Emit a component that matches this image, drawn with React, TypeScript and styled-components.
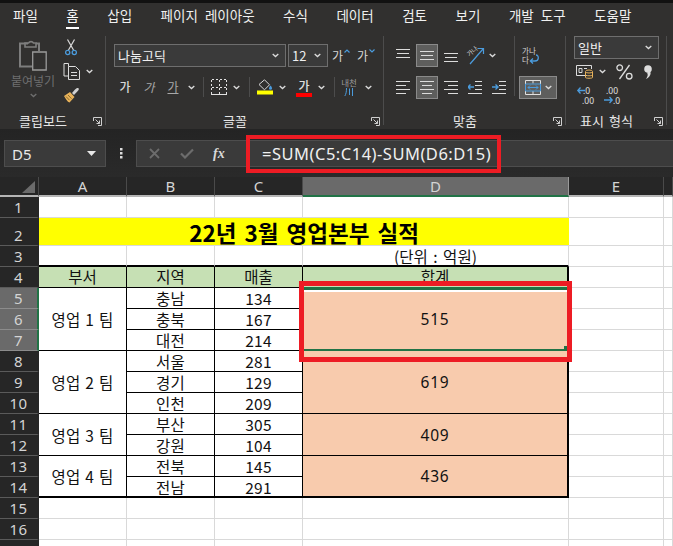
import React from 'react'
import styled, { createGlobalStyle } from 'styled-components'

const FONT = '"Noto Sans CJK KR", "Noto Sans", sans-serif'
const LATIN = '"Noto Sans", "Noto Sans CJK KR", sans-serif'
const BLUE = '#4b9bdc'
const LINE = '#d9d9d9'

const GlobalStyle = createGlobalStyle`
  html, body { margin: 0; padding: 0; height: 100%; overflow: hidden; background: #242424; }
  #root { height: 100%; }
  * { box-sizing: border-box; }
`

const Page = styled.div`
  width: 673px;
  height: 546px;
  display: flex;
  flex-direction: column;
  font-family: ${FONT};
  overflow: hidden;
  position: relative;
  background: #242424;
  border-top: 3px solid #111;
`
const TabBar = styled.div`
  height: 30px;
  flex: none;
  display: flex;
  align-items: flex-start;
  gap: 28.5px;
  padding: 2px 0 0 13px;
  background: #31302f;
`
const Tab = styled.div<{ $active?: boolean }>`
  color: ${p => (p.$active ? '#fff' : '#f0f0f0')};
  font-size: 13.5px;
  word-spacing: 4px;
  line-height: 20px;
  height: 24px;
  white-space: nowrap;
  border-bottom: ${p => (p.$active ? '2px solid #fff' : '2px solid transparent')};
`
const Ribbon = styled.div`
  height: 96px;
  flex: none;
  display: flex;
  background: #31302f;
  padding-bottom: 4px;
`
const Group = styled.div<{ $w: number }>`
  width: ${p => p.$w}px;
  flex: none;
  display: flex;
  flex-direction: column;
  border-right: 1px solid #4c4c4c;
  margin-top: 3px;
`
const GroupBody = styled.div`
  flex: 1;
  min-height: 0;
  display: flex;
`
const GroupFoot = styled.div`
  height: 20px;
  display: grid;
  grid-template-columns: 1fr auto 1fr;
  align-items: end;
  color: #e6e6e6;
  font-size: 13px;
  line-height: 16px;
  padding-right: 3px;
  & > svg { justify-self: end; margin-bottom: -1px; }
  & > span { white-space: nowrap; margin: 0 16px -4px 0; word-spacing: 2px; }
`
const PasteButton = styled.div`
  width: 58px;
  margin-left: 4px;
  display: flex;
  flex-direction: column;
  align-items: center;
  padding-top: 4px;
  color: #6f6f6f;
  font-size: 12px;
  line-height: 15px;
  & > span { margin: 2px 0 5px; white-space: nowrap; }
`
const ClipColumn = styled.div`
  display: flex;
  flex-direction: column;
  gap: 7px;
  padding-top: 3px;
`
const Column = styled.div<{ $pl?: number }>`
  display: flex;
  flex-direction: column;
  padding-left: ${p => p.$pl ?? 0}px;
`
const Row = styled.div<{ $h: number; $mt?: number; $ml?: number }>`
  display: flex;
  align-items: center;
  height: ${p => p.$h}px;
  margin-top: ${p => p.$mt ?? 0}px;
  margin-left: ${p => p.$ml ?? 0}px;
`
const Slot = styled.div<{ $w: number; $ml?: number }>`
  width: ${p => p.$w}px;
  margin-left: ${p => p.$ml ?? 0}px;
  flex: none;
  display: flex;
  align-items: center;
  justify-content: center;
  color: #d8d8d8;
  font-size: 12px;
  line-height: 14px;
`
const Select = styled.div<{ $w: number; $ml?: number }>`
  width: ${p => p.$w}px;
  height: 23px;
  margin-left: ${p => p.$ml ?? 0}px;
  flex: none;
  display: flex;
  align-items: center;
  justify-content: space-between;
  padding: 0 6px 0 3px;
  background: #3a3a3a;
  border: 1px solid #6e6e6e;
  color: #f0f0f0;
  font-size: 13px;
`
const ToggleButton = styled.div<{ $on?: boolean; $w?: number }>`
  width: ${p => p.$w ?? 22}px;
  height: 23px;
  flex: none;
  display: flex;
  align-items: center;
  justify-content: center;
  gap: 4px;
  background: ${p => (p.$on ? '#5e5e5d' : 'transparent')};
  border: 1px solid ${p => (p.$on ? '#8a8a8a' : 'transparent')};
`
const RibbonDivider = styled.div<{ $ml?: number; $h?: number }>`
  width: 1px;
  height: ${p => p.$h ?? 20}px;
  margin-left: ${p => p.$ml ?? 0}px;
  flex: none;
  background: #4c4c4c;
`
const StrongGa = styled.span`
  font-weight: 500;
  color: #d8d8d8;
`
const ItalicGa = styled.span`
  font-style: italic;
  color: #a8a8a8;
`
const UnderGa = styled.span`
  text-decoration: underline;
  color: #a8a8a8;
`
const ColorGa = styled.span`
  width: 16px;
  height: 19px;
  display: block;
  text-align: center;
  color: #e0e0e0;
  font-size: 12px;
  line-height: 15px;
  font-weight: 500;
  border-bottom: 4px solid #f00;
`
const ResizeGa = styled.span`
  display: flex;
  align-items: flex-start;
  gap: 1px;
  color: #d8d8d8;
  font-size: 12px;
  line-height: 14px;
`
const PhoneticStack = styled.span`
  display: flex;
  flex-direction: column;
  align-items: center;
  gap: 1px;
  color: #9a9a9a;
  font-size: 8.5px;
  line-height: 9px;
`

const FormulaBar = styled.div`
  height: 48px;
  flex: none;
  display: flex;
  align-items: flex-start;
  padding-top: 11px;
  background: linear-gradient(#242424, #2a2a2a);
`
const NameBox = styled.div`
  width: 102px;
  height: 27px;
  margin-left: 4px;
  display: flex;
  align-items: center;
  justify-content: space-between;
  padding: 0 9px 0 7px;
  background: #3a3a3a;
  border: 1px solid #4d4d4d;
  color: #e8e8e8;
  font-family: ${LATIN};
  font-size: 15px;
`
const Dots = styled.div`
  width: 30px;
  height: 27px;
  display: flex;
  align-items: center;
  justify-content: center;
`
const FormulaButtons = styled.div`
  width: 111px;
  height: 27px;
  display: flex;
  align-items: center;
  background: #3a3a3a;
  border: 1px solid #4d4d4d;
  border-right: none;
  padding-left: 12px;
  gap: 20px;
`
const FxLabel = styled.span`
  font-family: "Liberation Serif", serif;
  font-style: italic;
  font-weight: 700;
  font-size: 14px;
  color: #d8d8d8;
  margin-left: -1px;
`
const FormulaInput = styled.div`
  flex: 1;
  height: 27px;
  display: flex;
  align-items: center;
  padding-left: 14px;
  background: #3a3a3a;
  border: 1px solid #4d4d4d;
  border-right: none;
  color: #f0f0f0;
  font-family: ${LATIN};
  font-size: 16.5px;
  letter-spacing: 0.5px;
  white-space: nowrap;
`
const Sheet = styled.div`
  flex: 1;
  display: grid;
  grid-template-columns: 39px 88px 88px 88px 266px 95px 1fr;
  grid-template-rows: 20px 21px 28px 21px repeat(14, 21px);
  background: #fff;
  overflow: hidden;
`
const CornerCell = styled.div`
  background: #262626;
  border-right: 1px solid #4a4a4a;
  border-bottom: 2px solid #b5b5b5;
  display: flex;
  justify-content: flex-end;
  align-items: flex-end;
  padding: 0 3px 2px 0;
`
const ColHead = styled.div<{ $on?: boolean }>`
  background: ${p => (p.$on ? '#6a6a6a' : '#262626')};
  border-right: 1px solid ${p => (p.$on ? '#9a9a9a' : '#4a4a4a')};
  border-bottom: 2px solid ${p => (p.$on ? '#217346' : '#b5b5b5')};
  color: #d4d4d4;
  font-family: ${LATIN};
  font-size: 15px;
  line-height: 18px;
  text-align: center;
`
const RowHead = styled.div<{ $on?: boolean }>`
  background: ${p => (p.$on ? '#6a6a6a' : '#262626')};
  border-right: 2px solid ${p => (p.$on ? '#217346' : '#262626')};
  border-bottom: 1px solid ${p => (p.$on ? '#8c8c8c' : '#5a5a5a')};
  color: #d4d4d4;
  font-family: ${LATIN};
  font-size: 15px;
  letter-spacing: 0.5px;
  display: flex;
  align-items: flex-end;
  justify-content: center;
  line-height: 20px;
`
const Blank = styled.div`
  border-right: 1px solid ${LINE};
  border-bottom: 1px solid ${LINE};
`
const TitleCell = styled.div`
  grid-column: span 4;
  background: #ff0;
  color: #000;
  font-size: 22.5px;
  font-weight: 700;
  word-spacing: 3px;
  line-height: 28px;
  text-align: center;
  border-bottom: 1px solid ${LINE};
  white-space: nowrap;
`
const UnitCell = styled.div`
  border-right: 1px solid ${LINE};
  border-bottom: 2px solid #000;
  color: #111;
  font-size: 15.5px;
  word-spacing: 2px;
  line-height: 20px;
  text-align: center;
`
const RuledBlank = styled(Blank)`
  border-bottom: 2px solid #000;
`
const HeadCell = styled.div<{ $last?: boolean }>`
  background: #c6e0b4;
  color: #111;
  font-size: 15.5px;
  line-height: 19px;
  text-align: center;
  border-right: ${p => (p.$last ? 2 : 1)}px solid #000;
  border-bottom: 1px solid #000;
`
const DataCell = styled.div<{ $rows?: number; $thick?: boolean }>`
  grid-row: span ${p => p.$rows ?? 1};
  display: flex;
  align-items: center;
  justify-content: center;
  color: #111;
  font-size: 15.5px;
  word-spacing: 1px;
  letter-spacing: 0.3px;
  border-right: 1px solid #000;
  border-bottom: ${p => (p.$thick ? 2 : 1)}px solid #000;
  white-space: nowrap;
`
const TotalCell = styled(DataCell)`
  background: #f8cbad;
  border-right: 2px solid #000;
  font-family: ${LATIN};
  letter-spacing: 0.8px;
  position: relative;
`
const SelectionFrame = styled.div`
  position: absolute;
  left: 0;
  right: 0;
  top: -1px;
  bottom: -1px;
  border-top: 3px solid #217346;
  border-bottom: 2px solid #217346;
  box-shadow: inset 0 2px 0 #fff;
`
const FillHandle = styled.div`
  position: absolute;
  right: 0;
  bottom: -2px;
  width: 3px;
  height: 5px;
  background: #217346;
`
const RedBox = styled.div<{ $b: number; $x: number; $y: number; $w: number; $h: number }>`
  position: absolute;
  left: ${p => p.$x}px;
  top: ${p => p.$y}px;
  width: ${p => p.$w}px;
  height: ${p => p.$h}px;
  border: ${p => p.$b}px solid #ed1c24;
  pointer-events: none;
`

const Chevron = ({ c = '#dcdcdc' }: { c?: string }) => (
  <svg width="7" height="5" viewBox="0 0 7 5"><path d="M.7 1l2.800 2.600L6.300 1" fill="none" stroke={c} strokeWidth="1.3" /></svg>
)
const Caret = ({ down }: { down?: boolean }) => (
  <svg width="6" height="4" viewBox="0 0 6 4"><path d={down ? 'M.5 .5L3 3l2.500-2.500' : 'M.5 3.500L3 1l2.500 2.500'} fill="none" stroke={BLUE} strokeWidth="1.2" /></svg>
)
const Launcher = () => (
  <svg width="9" height="9" viewBox="0 0 9 9" fill="none" stroke="#cfcfcf">
    <path d="M.5 4V.5h8v8H5" />
    <path d="M2.500 2.500L6.500 6.500M6.500 3.500v3h-3" stroke="#cfcfcf" />
  </svg>
)
const PasteIcon = () => (
  <svg width="28" height="31" viewBox="0 0 28 31" fill="none" stroke="#7d7d7d" strokeWidth="1.6">
    <path d="M9 3.500H1v23h12" strokeWidth="2" />
    <path d="M17 3.500h3V11" strokeWidth="2" />
    <path d="M6 6V3h3.500a3 3 0 0 1 5 0H17v4H6z" />
    <path d="M13.700 12h13.500v18H13.700z" stroke="#9a9a9a" strokeWidth="1.3" />
  </svg>
)
const ScissorsIcon = () => (
  <svg width="12" height="17" viewBox="0 0 12 17" fill="none">
    <path d="M2.500 .5L8.500 11M9.500 .5L3.500 11" stroke="#d8d8d8" strokeWidth="1.2" />
    <circle cx="2.700" cy="13.500" r="2.100" stroke={BLUE} strokeWidth="1.3" />
    <circle cx="9.300" cy="13.500" r="2.100" stroke={BLUE} strokeWidth="1.3" />
  </svg>
)
const CopyIcon = () => (
  <svg width="17" height="17" viewBox="0 0 17 17" fill="none" stroke="#dcdcdc">
    <path d="M5.500 3.500V.5H1v12.500h4" />
    <path d="M5.500 3.500h7l4 4v9h-11z" />
    <path d="M8 9.500h6M8 12.500h6" />
  </svg>
)
const PainterIcon = () => (
  <svg width="17" height="16" viewBox="0 0 17 16">
    <path d="M9 6l3-3.500c1.200-1.200 2.500-2 3.500-1.200 1 1-.2 2.200-1.400 3.400L11 8z" fill="#d0d0d0" />
    <path d="M1 9l6-4 4.500 5-5 5.500C4.500 15 2.500 11.500 1 9z" fill="#e8b25a" />
    <path d="M3 9.500l3.500 3.700M5 8l3.500 3.700" stroke="#8a6a2a" />
  </svg>
)
const BorderIcon = () => (
  <svg width="16" height="16" viewBox="0 0 16 16" fill="none" stroke="#e2e2e2" shapeRendering="crispEdges">
    <path d="M.5 .5h15M.5 .5v15M15.500 .5v15M8.500 .5v15M.5 8.500h15" strokeDasharray="2 2" />
    <path d="M0 15.500h16" />
  </svg>
)
const FillIcon = () => (
  <svg width="17" height="16" viewBox="0 0 17 16">
    <path d="M2 5.500L7.500 .8l5 5-5 5z" fill="none" stroke="#d8d8d8" />
    <path d="M13.500 6.500c1 1.300 1.500 2 1.500 2.800a1.500 1.500 0 0 1-3 0c0-.8.5-1.500 1.500-2.800z" fill={BLUE} />
    <rect y="11.500" width="16" height="4" fill="#ff0" />
  </svg>
)
const PhoneticMark = () => (
  <svg width="10" height="8" viewBox="0 0 10 8" fill="none" stroke={BLUE}>
    <path d="M2.500 0C2.500 4 2 6 .8 8M5.500 .5V7M8.500 0v8" />
  </svg>
)
const VerticalLines = ({ y }: { y: number[] }) => (
  <svg width="14" height="13" viewBox="0 0 14 13" stroke="#dcdcdc">
    <path d={`M0 ${y[0] + 0.5}H14`} />
    <path d={`M1 ${y[1] + 0.5}H13`} />
    <path d={`M0 ${y[2] + 0.5}H14`} />
  </svg>
)
const FourLines = ({ a }: { a: 'l' | 'c' | 'r' }) => {
  const seg = a === 'l' ? [[0, 14], [0, 10], [0, 14], [0, 10]] : a === 'c' ? [[0, 14], [2, 12], [0, 14], [2, 12]] : [[0, 14], [4, 14], [0, 14], [4, 14]]
  return (
    <svg width="14" height="13" viewBox="0 0 14 13" stroke="#dcdcdc">
      {seg.map((s, i) => <path key={i} d={`M${s[0]} ${i * 4 + 0.5}H${s[1]}`} />)}
    </svg>
  )
}
const OrientIcon = () => (
  <svg width="19" height="19" viewBox="0 0 19 19" fill="none" overflow="visible">
    <text x="1" y="9" fontSize="6.500" fill="#cfcfcf" fontFamily={FONT} transform="rotate(-40 5 7)">가나</text>
    <path d="M4 18L17 3M11.500 2.500H17.500V8" stroke={BLUE} strokeWidth="1.2" />
  </svg>
)
const IndentIcon = ({ inc }: { inc?: boolean }) => (
  <svg width="14" height="13" viewBox="0 0 14 13" fill="none">
    <path d="M7 .5h7M7 4.500h7M7 8.500h7M0 12.500h14" stroke="#dcdcdc" />
    <path d={inc ? 'M0 6h6M3.500 3.500L6 6 3.500 8.500' : 'M6 6H0M2.500 3.500L0 6l2.500 2.500'} stroke={BLUE} strokeWidth="1.4" />
  </svg>
)
const WrapIcon = () => (
  <svg width="18" height="19" viewBox="0 0 18 19" fill="none" overflow="visible">
    <text x="0" y="7.500" fontSize="7.500" fill="#d8d8d8" fontFamily={FONT}>가나</text>
    <text x="0" y="17" fontSize="7.500" fill="#d8d8d8" fontFamily={FONT}>다</text>
    <path d="M14 9c3 0 3.500 6-1 6H8.500M11 12.500L8.300 15l2.700 2.500" stroke={BLUE} strokeWidth="1.3" />
  </svg>
)
const MergeIcon = () => (
  <svg width="16" height="15" viewBox="0 0 16 15" fill="none">
    <path d="M.5 .5h15v14H.5zM8 .5v3M8 11v3" stroke="#e0e0e0" />
    <path d="M.5 4h15v7H.5z" stroke={BLUE} />
    <path d="M3 7.500h10M5 5.500l-2 2 2 2M11 5.500l2 2-2 2" stroke={BLUE} />
  </svg>
)
const CurrencyIcon = () => (
  <svg width="18" height="16" viewBox="0 0 18 16" fill="none">
    <path d="M11 11.500H.5v-10h15V5" stroke="#dcdcdc" />
    <path d="M3 4.500h3v4H3zM8 4.500h3" stroke="#dcdcdc" />
    <ellipse cx="13" cy="7.500" rx="3.500" ry="1.500" fill="#31302f" stroke="#e8b25a" />
    <path d="M9.500 8v5.500c0 1 7 1 7 0V8M9.500 11c0 1 7 1 7 0" stroke="#e8b25a" />
  </svg>
)
const PercentIcon = () => (
  <svg width="17" height="16" viewBox="0 0 17 16" fill="none" stroke="#dcdcdc" strokeWidth="1.3">
    <circle cx="3.700" cy="3.700" r="2.800" />
    <circle cx="13.200" cy="12.200" r="2.800" />
    <path d="M13.500 1L3.500 15" />
  </svg>
)
const CommaIcon = () => (
  <svg width="8" height="14" viewBox="0 0 8 14">
    <circle cx="4" cy="4" r="3.800" fill="#dcdcdc" />
    <path d="M4.500 6c3.300 0 3 5.500-2.500 8 2-2.800 2-4.500 1.200-6z" fill="#dcdcdc" />
  </svg>
)
const DecimalIcon = ({ up }: { up?: boolean }) => (
  <svg width="19" height="19" viewBox="0 0 19 19" fill="none" overflow="visible">
    {up ? (
      <>
        <text x="6" y="8" fontSize="8.500" fill="#e0e0e0" fontFamily={LATIN}>.0</text>
        <text x="5" y="18" fontSize="8.500" fill="#e0e0e0" fontFamily={LATIN}>.00</text>
        <path d="M8 4.500H1M3.500 1.500L.8 4.500l2.700 3" stroke={BLUE} strokeWidth="1.3" />
      </>
    ) : (
      <>
        <text x="3" y="8" fontSize="8.500" fill="#e0e0e0" fontFamily={LATIN}>.00</text>
        <text x="10" y="18" fontSize="8.500" fill="#e0e0e0" fontFamily={LATIN}>.0</text>
        <path d="M1 14h8M6.500 11l2.700 3-2.700 3" stroke={BLUE} strokeWidth="1.3" />
      </>
    )}
  </svg>
)

const tabs = ['파일', '홈', '삽입', '페이지 레이아웃', '수식', '데이터', '검토', '보기', '개발 도구', '도움말']
const teams = [
  { name: '영업 1 팀', total: 515, rows: [['충남', 134], ['충북', 167], ['대전', 214]], start: 5 },
  { name: '영업 2 팀', total: 619, rows: [['서울', 281], ['경기', 129], ['인천', 209]], start: 8 },
  { name: '영업 3 팀', total: 409, rows: [['부산', 305], ['강원', 104]], start: 11 },
  { name: '영업 4 팀', total: 436, rows: [['전북', 145], ['전남', 291]], start: 13 },
]

const Tail = () => (
  <>
    <Blank />
    <Blank />
  </>
)

export default function App() {
  return (
    <Page>
      <GlobalStyle />
      <TabBar>
        {tabs.map(t => <Tab key={t} $active={t === '홈'}>{t}</Tab>)}
      </TabBar>
      <Ribbon>
        <Group $w={106}>
          <GroupBody>
            <PasteButton>
              <PasteIcon />
              <span>붙여넣기</span>
              <Chevron c="#6f6f6f" />
            </PasteButton>
            <ClipColumn>
              <Slot $w={18}><ScissorsIcon /></Slot>
              <Row $h={17}>
                <Slot $w={18}><CopyIcon /></Slot>
                <Slot $w={14} $ml={2}><Chevron /></Slot>
              </Row>
              <Slot $w={18}><PainterIcon /></Slot>
            </ClipColumn>
          </GroupBody>
          <GroupFoot><i /><span>클립보드</span><Launcher /></GroupFoot>
        </Group>

        <Group $w={278}>
          <GroupBody>
            <Column>
              <Row $h={23} $mt={8} $ml={8}>
                <Select $w={172}>나눔고딕<Chevron /></Select>
                <Select $w={40} $ml={2}>12<Chevron /></Select>
                <Slot $w={20} $ml={3}><ResizeGa>가<Caret /></ResizeGa></Slot>
                <Slot $w={20} $ml={5}><ResizeGa>가<Caret down /></ResizeGa></Slot>
              </Row>
              <Row $h={20} $mt={10} $ml={7}>
                <Slot $w={24}><StrongGa>가</StrongGa></Slot>
                <Slot $w={24}><ItalicGa>가</ItalicGa></Slot>
                <Slot $w={24}><UnderGa>가</UnderGa></Slot>
                <Slot $w={12}><Chevron /></Slot>
                <RibbonDivider $ml={6} />
                <Slot $w={21} $ml={4}><BorderIcon /></Slot>
                <Slot $w={14}><Chevron /></Slot>
                <RibbonDivider $ml={6} />
                <Slot $w={22} $ml={4}><FillIcon /></Slot>
                <Slot $w={12}><Chevron /></Slot>
                <Slot $w={22} $ml={5}><ColorGa>가</ColorGa></Slot>
                <Slot $w={12}><Chevron /></Slot>
                <RibbonDivider $ml={7} />
                <Slot $w={28}><PhoneticStack>내천<PhoneticMark /></PhoneticStack></Slot>
                <Slot $w={10}><Chevron /></Slot>
              </Row>
            </Column>
          </GroupBody>
          <GroupFoot><i /><span>글꼴</span><Launcher /></GroupFoot>
        </Group>

        <Group $w={182}>
          <GroupBody>
            <Column $pl={7}>
              <Row $h={23} $mt={8}>
                <Slot $w={24}><VerticalLines y={[0, 4, 8]} /></Slot>
                <Slot $w={24}><ToggleButton $on><VerticalLines y={[2, 6, 10]} /></ToggleButton></Slot>
                <Slot $w={24}><VerticalLines y={[4, 8, 12]} /></Slot>
                <Slot $w={24}><OrientIcon /></Slot>
                <Slot $w={10}><Chevron /></Slot>
              </Row>
              <Row $h={23} $mt={9}>
                <Slot $w={24}><FourLines a="l" /></Slot>
                <Slot $w={24}><ToggleButton $on><FourLines a="c" /></ToggleButton></Slot>
                <Slot $w={24}><FourLines a="r" /></Slot>
                <Slot $w={24}><IndentIcon /></Slot>
                <Slot $w={24}><IndentIcon inc /></Slot>
              </Row>
            </Column>
            <RibbonDivider $ml={3} $h={60} />
            <Column $pl={4}>
              <Row $h={23} $mt={8} $ml={3}><WrapIcon /></Row>
              <Row $h={23} $mt={9}>
                <ToggleButton $on $w={38}><MergeIcon /><Chevron /></ToggleButton>
              </Row>
            </Column>
          </GroupBody>
          <GroupFoot><i /><span>맞춤</span><Launcher /></GroupFoot>
        </Group>

        <Group $w={101}>
          <GroupBody>
            <Column $pl={8}>
              <Select $w={85}>일반<Chevron /></Select>
              <Row $h={18} $mt={4} $ml={1}>
                <Slot $w={20}><CurrencyIcon /></Slot>
                <Slot $w={14}><Chevron /></Slot>
                <Slot $w={30}><PercentIcon /></Slot>
                <Slot $w={18}><CommaIcon /></Slot>
              </Row>
              <Row $h={20} $mt={5} $ml={2}>
                <Slot $w={20}><DecimalIcon up /></Slot>
                <Slot $w={20} $ml={6}><DecimalIcon /></Slot>
              </Row>
            </Column>
          </GroupBody>
          <GroupFoot><i /><span>표시 형식</span><Launcher /></GroupFoot>
        </Group>
      </Ribbon>

      <FormulaBar>
        <NameBox>D5<svg width="9" height="5" viewBox="0 0 9 5"><path d="M0 0h9L4.500 5z" fill="#e8e8e8" /></svg></NameBox>
        <Dots>
          <svg width="3" height="11" viewBox="0 0 3 11" fill="#dcdcdc"><rect width="2.500" height="2.500" /><rect y="4" width="2.500" height="2.500" /><rect y="8" width="2.500" height="2.500" /></svg>
        </Dots>
        <FormulaButtons>
          <svg width="11" height="11" viewBox="0 0 11 11" stroke="#6c6c6c" strokeWidth="1.8"><path d="M1 1l9 9M10 1l-9 9" /></svg>
          <svg width="14" height="11" viewBox="0 0 14 11" fill="none" stroke="#6c6c6c" strokeWidth="2.2"><path d="M1 5.500l4 4 8-8" /></svg>
          <FxLabel>fx</FxLabel>
        </FormulaButtons>
        <FormulaInput>=SUM(C5:C14)-SUM(D6:D15)</FormulaInput>
      </FormulaBar>

      <Sheet>
        <CornerCell><svg width="13" height="12" viewBox="0 0 13 12"><path d="M13 0v12H0z" fill="#6b6b6b" /></svg></CornerCell>
        <ColHead>A</ColHead>
        <ColHead>B</ColHead>
        <ColHead>C</ColHead>
        <ColHead $on>D</ColHead>
        <ColHead>E</ColHead>
        <ColHead />

        <RowHead>1</RowHead>
        <Blank /><Blank /><Blank /><Blank /><Tail />

        <RowHead>2</RowHead>
        <TitleCell>22년 3월 영업본부 실적</TitleCell>
        <Tail />

        <RowHead>3</RowHead>
        <RuledBlank /><RuledBlank /><RuledBlank />
        <UnitCell>(단위 : 억원)</UnitCell>
        <Tail />

        <RowHead>4</RowHead>
        <HeadCell>부서</HeadCell>
        <HeadCell>지역</HeadCell>
        <HeadCell>매출</HeadCell>
        <HeadCell $last>합계</HeadCell>
        <Tail />

        {teams.map((team, t) =>
          team.rows.map(([area, sales], i) => {
            const n = team.start + i
            const on = n >= 5 && n <= 7
            const lastInTeam = t === teams.length - 1
            const lastRow = lastInTeam && i === team.rows.length - 1
            return (
              <React.Fragment key={n}>
                <RowHead $on={on}>{n}</RowHead>
                {i === 0 && <DataCell $rows={team.rows.length} $thick={lastInTeam}>{team.name}</DataCell>}
                <DataCell $thick={lastRow}>{area}</DataCell>
                <DataCell $thick={lastRow}>{sales}</DataCell>
                {i === 0 && (
                  <TotalCell $rows={team.rows.length} $thick={lastInTeam}>
                    {team.total}
                    {t === 0 && <SelectionFrame><FillHandle /></SelectionFrame>}
                  </TotalCell>
                )}
                <Tail />
              </React.Fragment>
            )
          })
        )}

        {[15, 16].map(n => (
          <React.Fragment key={n}>
            <RowHead>{n}</RowHead>
            <Blank /><Blank /><Blank /><Blank /><Tail />
          </React.Fragment>
        ))}
        <RowHead />
        <Blank /><Blank /><Blank /><Blank /><Tail />
      </Sheet>

      <RedBox $b={4} $x={246} $y={132} $w={255} $h={38} />
      <RedBox $b={5} $x={299} $y={278} $w={273} $h={81} />
    </Page>
  )
}
